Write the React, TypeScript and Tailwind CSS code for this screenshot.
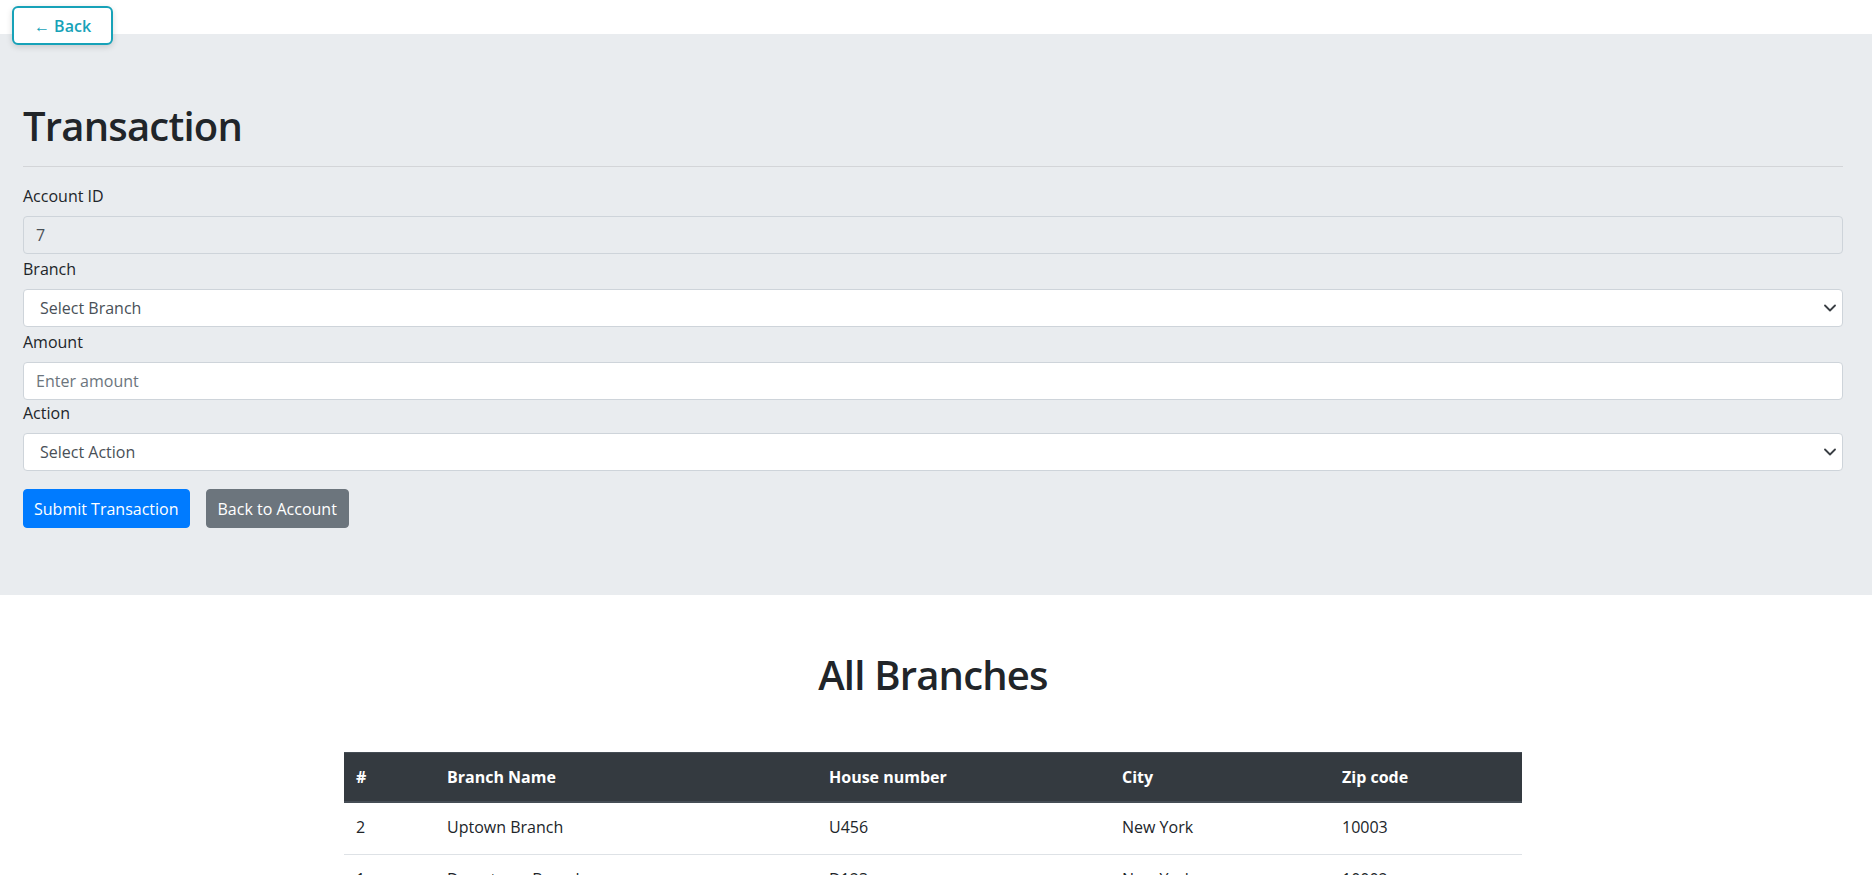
import type { ReactNode } from "react";

type Branch = {
  id: number;
  name: string;
  house: string;
  city: string;
  zip: string;
};

const branches: Branch[] = [
  { id: 2, name: "Uptown Branch", house: "U456", city: "New York", zip: "10003" },
  { id: 1, name: "Downtown Branch", house: "D123", city: "New York", zip: "10002" },
  { id: 3, name: "Midtown Branch", house: "M789", city: "New York", zip: "10001" },
];

function Label({ children }: { children: ReactNode }) {
  return <label className="mb-2 block leading-6">{children}</label>;
}

function Chevron() {
  return (
    <svg
      className="pointer-events-none absolute right-[7px] top-1/2 -translate-y-1/2"
      width="12"
      height="8"
      viewBox="0 0 12 8"
      fill="none"
    >
      <path d="M1 1.5l5 5 5-5" stroke="#3a3f44" strokeWidth="1.8" strokeLinecap="round" strokeLinejoin="round" />
    </svg>
  );
}

function SelectBox({ placeholder }: { placeholder: string }) {
  return (
    <div className="relative">
      <select className="block h-[38px] w-full appearance-none rounded border border-[#ced4da] bg-white pl-[16px] pr-8 text-[#495057] outline-none">
        <option>{placeholder}</option>
      </select>
      <Chevron />
    </div>
  );
}

export default function App() {
  return (
    <div className="relative min-h-screen bg-white pt-[34px] font-['Open_Sans',sans-serif] text-base text-[#212529]">
      <button className="absolute left-[12px] top-[6px] z-10 flex h-[39px] w-[101px] items-center justify-center rounded-md border-2 border-[#17a2b8] bg-white font-semibold text-[#17a2b8] shadow-[0_2px_6px_rgba(0,0,0,0.15)]">
        ← Back
      </button>

      <div className="bg-[#e9ecef] pb-[67px] pl-[23px] pr-[29px] pt-[68px]">
        <h1 className="text-[40px] font-semibold leading-[48px] tracking-[-0.02em]">Transaction</h1>
        <hr className="mb-[17px] mt-4 border-t border-[#d3d5d8]" />

        <Label>Account ID</Label>
        <input
          disabled
          value="7"
          className="mb-[3px] block h-[38px] w-full rounded border border-[#ced4da] bg-[#e9ecef] px-3 text-[#495057]"
        />

        <Label>Branch</Label>
        <div className="mb-[3px]">
          <SelectBox placeholder="Select Branch" />
        </div>

        <Label>Amount</Label>
        <input
          placeholder="Enter amount"
          className="mb-[1px] block h-[38px] w-full rounded border border-[#ced4da] bg-white px-3 text-[#495057] outline-none placeholder:text-[#6c757d]"
        />

        <Label>Action</Label>
        <SelectBox placeholder="Select Action" />

        <div className="mt-[18px] flex gap-4">
          <button className="h-[39px] rounded border border-[#007bff] bg-[#007bff] px-[10px] text-white">
            Submit Transaction
          </button>
          <button className="h-[39px] rounded border border-[#6c757d] bg-[#6c757d] px-[11px] text-white">
            Back to Account
          </button>
        </div>
      </div>

      <div className="pr-[6px]">
        <h2 className="mt-[56px] text-center text-[40px] font-semibold leading-[48px] tracking-[-0.02em]">
          All Branches
        </h2>
        <table className="mx-auto mt-[53px] w-[1178px] border-collapse text-left">
          <thead>
            <tr className="border-b-2 border-t border-[#454d55] bg-[#343a40] text-white">
              <th className="w-[91px] px-3 py-3 font-bold leading-6">#</th>
              <th className="w-[382px] px-3 py-3 font-bold leading-6">Branch Name</th>
              <th className="w-[293px] px-3 py-3 font-bold leading-6">House number</th>
              <th className="w-[220px] px-3 py-3 font-bold leading-6">City</th>
              <th className="px-3 py-3 font-bold leading-6">Zip code</th>
            </tr>
          </thead>
          <tbody>
            {branches.map((b) => (
              <tr key={b.id} className="border-b border-[#dee2e6]">
                <td className="px-3 pb-[15px] pt-[12px] leading-6">{b.id}</td>
                <td className="px-3 pb-[15px] pt-[12px] leading-6">{b.name}</td>
                <td className="px-3 pb-[15px] pt-[12px] leading-6">{b.house}</td>
                <td className="px-3 pb-[15px] pt-[12px] leading-6">{b.city}</td>
                <td className="px-3 pb-[15px] pt-[12px] leading-6">{b.zip}</td>
              </tr>
            ))}
          </tbody>
        </table>
      </div>
    </div>
  );
}
